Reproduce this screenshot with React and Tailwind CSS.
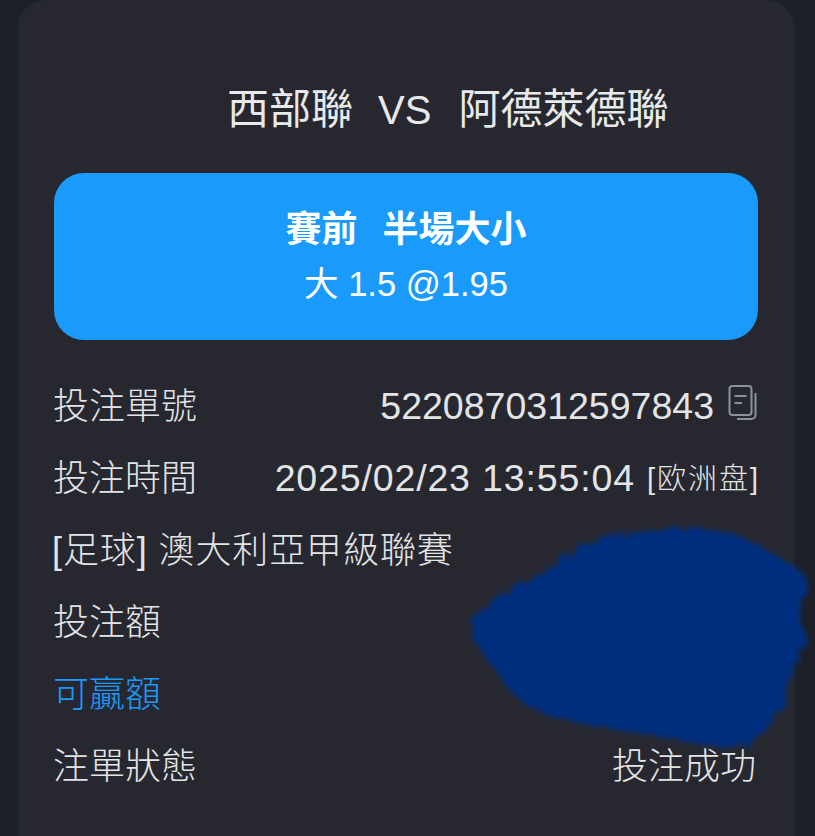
import React from "react";

const FONT = "font-['Liberation_Sans','Noto_Sans_CJK_TC',sans-serif]";

function CopyIcon() {
  return (
    <svg width="29" height="36" viewBox="0 0 29 36" fill="none" stroke="#8f9199" strokeWidth="2" className="mb-[9px] ml-[14px] shrink-0">
      <rect x="1.5" y="1" width="22" height="29" rx="3" />
      <path d="M6.5 11h12M6.5 18h7.5" />
      <path d="M27.5 8v22a4 4 0 0 1-4 4H9" />
    </svg>
  );
}

function Row({ label, labelClass = "-ml-px text-[#e3e4e6]", children }) {
  return (
    <div className="flex h-[72px] items-center justify-between">
      <span className={labelClass}>{label}</span>
      {children}
    </div>
  );
}

export default function App() {
  return (
    <div className={`h-[836px] w-[815px] overflow-hidden bg-[#1d2027] pl-[18px] pr-[21px] ${FONT}`}>
      <div className="relative h-full rounded-t-[28px] bg-[#27282f] pl-[36px] pr-[36px] text-[36px] leading-none font-light text-[#e3e4e6]">
        <h1 className="flex pt-[89px] pl-[173px] text-[42px] leading-[42px] font-normal whitespace-pre text-[#e8e9ea]">
          <span>西部聯</span>
          <span className="ml-[25px] text-[40px]">VS</span>
          <span className="ml-[27px]">阿德萊德聯</span>
        </h1>

        <div className="mt-[42px] flex h-[167px] flex-col items-center rounded-[30px] bg-[#1a9bfc] pt-[39px] text-white">
          <div className="flex text-[36px] leading-[36px] font-bold">
            <span>賽前</span>
            <span className="ml-[25px]">半場大小</span>
          </div>
          <div className="mt-[18px] text-[34.5px] leading-[36px] font-normal">大 1.5 @1.95</div>
        </div>

        <div className="mt-[31px]">
          <Row label="投注單號">
            <div className="mr-[1px] flex items-center">
              <span className="text-[37.5px]">5220870312597843</span>
              <CopyIcon />
            </div>
          </Row>
          <Row label="投注時間">
            <div className="flex items-center">
              <span className="text-[37.5px] tracking-[0.85px]">2025/02/23 13:55:04</span>
              <span className="ml-[12px] -mr-[2px] text-[29px] tracking-[2px]">[欧洲盘]</span>
            </div>
          </Row>
          <Row label="[足球] 澳大利亞甲級聯賽" labelClass="-ml-[2px] tracking-[0.9px] text-[#e3e4e6]" />
          <Row label="投注額" />
          <Row label="可贏額" labelClass="-ml-px text-[#1a9bfc]" />
          <Row label="注單狀態">
            <span className="mr-[2px]">投注成功</span>
          </Row>
        </div>

        {/* redaction scribble */}
        <svg width="370" height="250" viewBox="0 0 370 250" className="absolute top-[512px] left-[438px]">
          <defs>
            <filter id="soft" x="-10%" y="-10%" width="120%" height="120%">
              <feTurbulence type="fractalNoise" baseFrequency="0.09" numOctaves="3" seed="4" />
              <feDisplacementMap in="SourceGraphic" scale="13" />
              <feGaussianBlur stdDeviation="2.4" />
            </filter>
          </defs>
          <path
            d="M14 112 C30 85 70 70 100 52 C120 30 160 20 200 18 C240 14 285 18 310 38 C330 48 345 55 354 72 C345 88 340 98 352 130 C338 150 332 170 325 195 C315 215 300 232 280 236 C240 232 205 226 165 218 C125 212 100 206 80 198 C60 186 48 176 42 160 C28 146 18 132 14 112Z"
            fill="#032f7f"
            filter="url(#soft)"
          />
        </svg>
      </div>
    </div>
  );
}
